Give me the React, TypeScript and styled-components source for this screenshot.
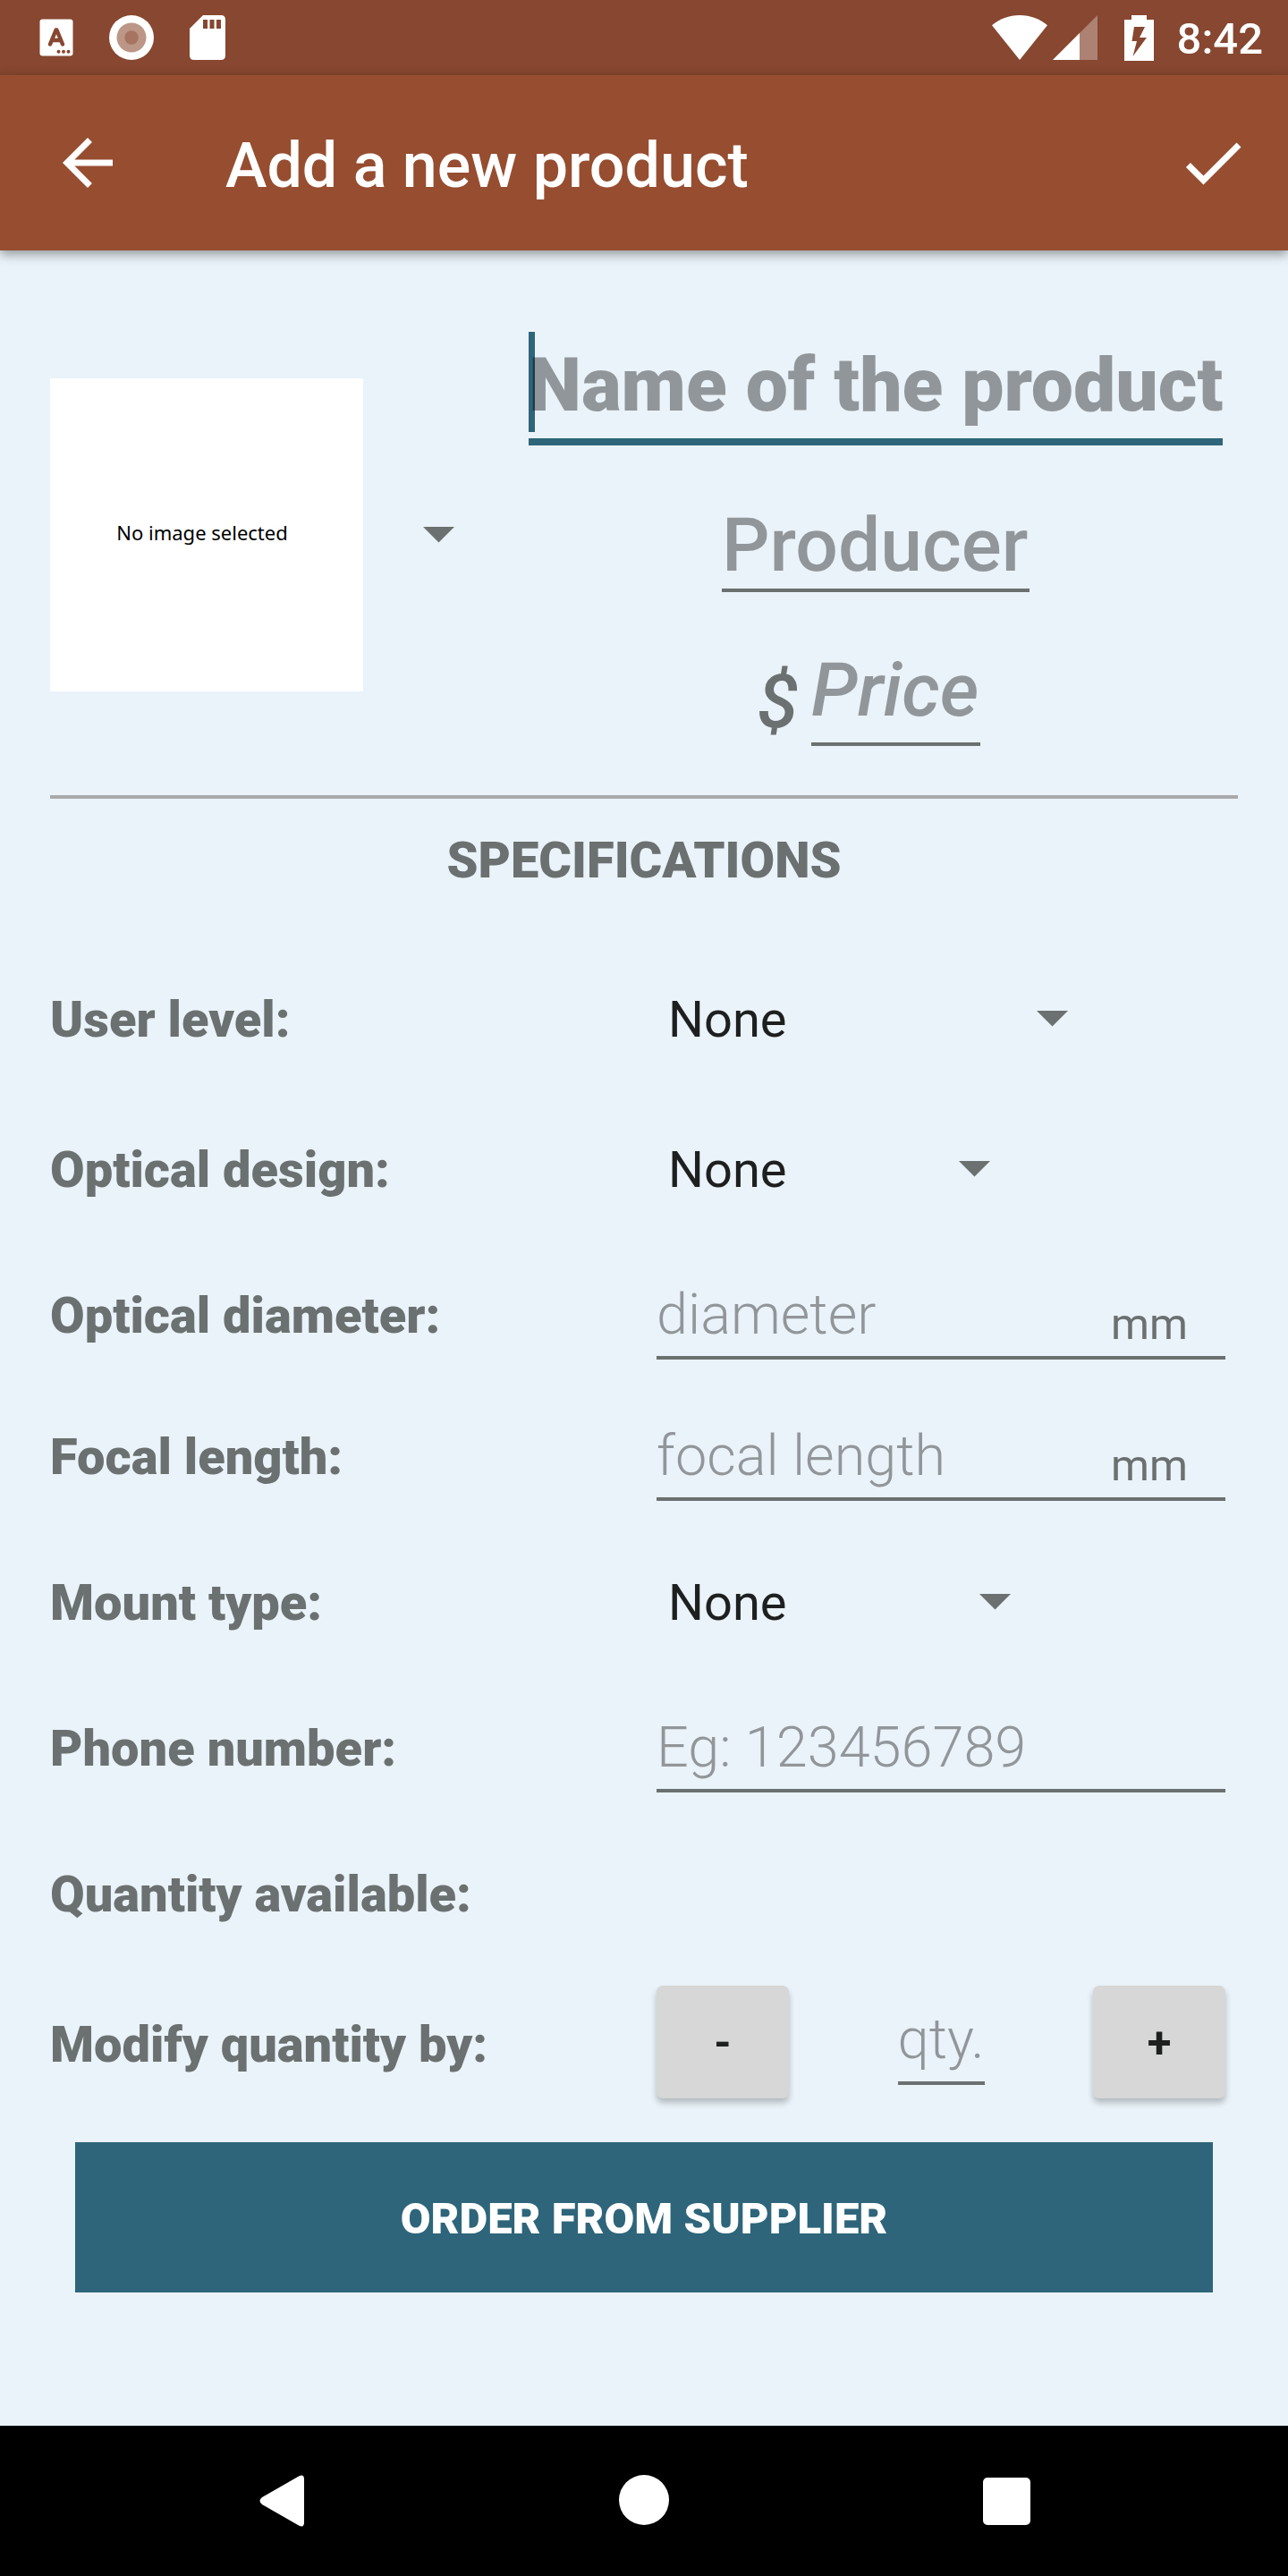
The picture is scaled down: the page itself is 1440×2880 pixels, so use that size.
import React from "react";
import styled, { createGlobalStyle, css } from "styled-components";

const color = {
  status: "#874730",
  bar: "#964d30",
  page: "#eaf3f9",
  accent: "#2e657a",
  label: "#6b7070",
  hint: "rgba(0, 0, 0, 0.38)",
  text: "#1e1f1f",
  key: "#d6d7d6",
  rule: "#a9a9a9",
};

const GlobalStyle = createGlobalStyle`
  *, *::before, *::after { box-sizing: border-box; }
  body { margin: 0; background: ${color.page}; }
  body, button, input, select { font-family: Roboto, "Noto Sans", sans-serif; }
  button { border: 0; padding: 0; background: none; color: inherit; cursor: pointer; }
`;

const Screen = styled.div`
  display: flex;
  flex-direction: column;
  min-height: 100vh;
`;

const StatusBar = styled.div`
  display: flex;
  align-items: center;
  justify-content: space-between;
  height: 84px;
  padding: 0 28px 0 44px;
  background: ${color.status};
  color: #fff;
`;

const IconGroup = styled.div<{ $gap: number }>`
  display: flex;
  align-items: center;
  gap: ${(p) => p.$gap}px;
`;

const BatterySlot = styled.span`
  display: flex;
  padding: 0 20px 0 24px;
`;

const Clock = styled.time`
  padding-top: 4px;
  font-size: 49px;
  font-weight: 500;
  line-height: 56px;
`;

const AppBar = styled.header`
  display: flex;
  align-items: center;
  gap: 112px;
  height: 196px;
  padding: 0 42px 0 56px;
  background: ${color.bar};
  color: #fff;
  box-shadow: 0 4px 12px rgba(0, 0, 0, 0.4);
`;

const IconButton = styled.button`
  display: flex;
  flex: none;
`;

const Title = styled.h1`
  flex: 1;
  margin: 0;
  padding-top: 6px;
  font-size: 70px;
  font-weight: 500;
  line-height: 82px;
`;

const Form = styled.form`
  display: flex;
  flex-direction: column;
  padding: 82px 56px 56px;
`;

const Summary = styled.section`
  display: flex;
  align-items: center;
  padding-bottom: 55px;
  border-bottom: 4px solid ${color.rule};
`;

const ImagePicker = styled.button`
  display: flex;
  align-items: center;
  gap: 67px;
`;

const Preview = styled.span`
  display: flex;
  align-items: center;
  justify-content: center;
  width: 350px;
  height: 350px;
  padding: 0 10px 6px 0;
  background: #fff;
  color: #000;
  font-family: "Noto Sans", sans-serif;
  font-size: 22px;
  line-height: 28px;
`;

const Identity = styled.div`
  display: flex;
  flex: 1;
  flex-direction: column;
  align-items: center;
  gap: 52px;
  margin-left: 66px;
  padding: 12px 17px 0;
`;

const lineInput = css`
  min-width: 0;
  margin: 0;
  padding: 0;
  border: 0;
  border-radius: 0;
  outline: 0;
  background: none;
  color: ${color.text};
  &::placeholder {
    color: ${color.hint};
    opacity: 1;
  }
`;

const NameField = styled.div`
  position: relative;
  width: 100%;
`;

const Cursor = styled.span`
  position: absolute;
  top: -3px;
  left: 0;
  width: 7px;
  height: 112px;
  background: ${color.accent};
`;

const NameInput = styled.input`
  ${lineInput}
  position: relative;
  display: block;
  width: 100%;
  height: 124px;
  padding-bottom: 4px;
  border-bottom: 8px solid ${color.accent};
  font-size: 84px;
  font-weight: 900;
`;

const ProducerInput = styled.input`
  ${lineInput}
  width: 344px;
  height: 112px;
  padding-top: 10px;
  border-bottom: 4px solid ${color.label};
  font-size: 84px;
  font-weight: 500;
`;

const PriceField = styled.label`
  display: flex;
  align-items: flex-end;
  gap: 14px;
  padding-right: 16px;
  color: ${color.label};
  font-size: 84px;
  font-style: italic;
  font-weight: 500;
  line-height: 98px;
`;

const PriceInput = styled.input`
  ${lineInput}
  width: 189px;
  height: 120px;
  padding-bottom: 2px;
  border-bottom: 4px solid ${color.label};
  font: inherit;
`;

const SectionTitle = styled.h2`
  margin: 36px 0 60px;
  color: ${color.label};
  font-size: 56px;
  font-weight: 900;
  line-height: 66px;
  text-align: center;
`;

const Row = styled.div<{ $compact?: boolean }>`
  display: grid;
  grid-template-columns: 678px minmax(0, 1fr);
  align-items: center;
  min-height: ${(p) => (p.$compact ? 158 : 168)}px;
  padding-right: 14px;
`;

const Label = styled.label`
  padding-top: 2px;
  color: ${color.label};
  font-size: 56px;
  font-weight: 900;
  line-height: 66px;
`;

const Field = styled.div`
  display: flex;
  align-items: flex-end;
  height: 100px;
  border-bottom: 4px solid ${color.label};
`;

const FieldInput = styled.input`
  ${lineInput}
  flex: 1;
  height: 96px;
  padding-top: 2px;
  font-size: 63px;
  font-weight: 300;
`;

const Unit = styled.span`
  padding: 0 42px 7px 0;
  color: ${color.label};
  font-size: 49px;
  line-height: 57px;
`;

const Spinner = styled.div<{ $width: number }>`
  position: relative;
  display: flex;
  align-items: center;
  width: ${(p) => p.$width}px;
  max-width: 100%;
`;

const SpinnerSelect = styled.select`
  width: 100%;
  height: 84px;
  padding: 2px 56px 0 13px;
  border: 0;
  outline: 0;
  background: none;
  appearance: none;
  color: ${color.text};
  font-size: 56px;
`;

const SpinnerArrow = styled.span`
  position: absolute;
  right: 0;
  display: flex;
  pointer-events: none;
`;

const Stepper = styled.div`
  display: flex;
  align-items: center;
  justify-content: space-between;
  padding-bottom: 4px;
`;

const StepButton = styled.button`
  width: 148px;
  height: 126px;
  border-radius: 7px;
  background: ${color.key};
  color: ${color.text};
  font-size: 49px;
  font-weight: 700;
  box-shadow: 0 5px 7px rgba(0, 0, 0, 0.24);
`;

const QuantityInput = styled.input`
  ${lineInput}
  width: 97px;
  height: 100px;
  margin-bottom: 4px;
  border-bottom: 4px solid ${color.label};
  font-size: 63px;
  font-weight: 300;
`;

const OrderButton = styled.button`
  height: 168px;
  margin: 26px 28px 0;
  padding-top: 2px;
  background: ${color.accent};
  color: #fff;
  font-size: 49px;
  font-weight: 900;
`;

const NavBar = styled.nav`
  display: flex;
  align-items: center;
  justify-content: center;
  gap: 348px;
  height: 168px;
  margin-top: auto;
  background: #000;
`;

const DropArrow = () => (
  <svg width="35" height="18" viewBox="0 0 35 18" aria-hidden="true">
    <path d="M0 0H35L17.5 17.5Z" fill={color.label} />
  </svg>
);

const KeyboardIcon = () => (
  <svg width="38" height="42" viewBox="0 0 38 42" aria-hidden="true">
    <rect x="0.5" y="0.5" width="37" height="41" rx="3" fill="#fff" />
    <path
      d="M12 28.5L18.6 12.5H19.4L26 28.5M14.5 24H23.5"
      fill="none"
      stroke={color.status}
      strokeWidth="4.5"
      strokeLinecap="round"
      strokeLinejoin="round"
    />
    <circle cx="21.5" cy="36.8" r="2" fill={color.status} />
    <circle cx="27" cy="36.8" r="2" fill={color.status} />
    <circle cx="32.5" cy="36.8" r="2" fill={color.status} />
  </svg>
);

const RecordIcon = () => (
  <svg width="50" height="50" viewBox="0 0 50 50" aria-hidden="true">
    <circle cx="25" cy="25" r="25" fill="#fff" />
    <circle cx="25" cy="25" r="16.5" fill="#bc9687" />
    <circle cx="25" cy="25" r="7.7" fill="#a67460" />
  </svg>
);

const SdCardIcon = () => (
  <svg width="40" height="50" viewBox="0 0 40 50" aria-hidden="true">
    <path d="M15 0H35Q40 0 40 5V45Q40 50 35 50H5Q0 50 0 45V15Z" fill="#fff" />
    <path d="M15 5h5v10h-5zM22.5 5h5v10h-5zM30 5h5v10h-5z" fill={color.status} />
  </svg>
);

const WifiIcon = () => (
  <svg width="62" height="50" viewBox="0 0 62 50" aria-hidden="true">
    <path d="M0 11.3C8.5 4 19 0 31 0S53.5 4 62 11.3L31 50Z" fill="#fff" />
  </svg>
);

const SignalIcon = () => (
  <svg width="50" height="50" viewBox="0 0 50 50" aria-hidden="true">
    <path d="M0 50L50 0V50Z" fill="#fff" fillOpacity="0.32" />
    <path d="M0 50L30 20V50Z" fill="#fff" />
  </svg>
);

const BatteryIcon = () => (
  <svg width="33" height="51" viewBox="0 0 33 51" aria-hidden="true">
    <path d="M8 0H25V5H33V51H0V5H8Z" fill="#fff" />
    <path d="M11 13H23L17 25H25L9.5 46L14 29H8.5Z" fill={color.status} />
  </svg>
);

const BackArrow = () => (
  <svg width="84" height="84" viewBox="0 0 24 24" aria-hidden="true">
    <path d="M20 11H7.83l5.59-5.59L12 4l-8 8 8 8 1.41-1.41L7.83 13H20v-2z" fill="currentColor" />
  </svg>
);

const CheckMark = () => (
  <svg width="84" height="84" viewBox="0 0 24 24" aria-hidden="true">
    <path d="M9 16.17L4.83 12l-1.42 1.41L9 19 21 7l-1.41-1.41z" fill="currentColor" />
  </svg>
);

type Choice = { id: string; label: string; width: number; options: string[] };

const ChoiceRow = ({ id, label, width, options }: Choice) => (
  <Row>
    <Label htmlFor={id}>{label}</Label>
    <Spinner $width={width}>
      <SpinnerSelect id={id} defaultValue={options[0]}>
        {options.map((option) => (
          <option key={option}>{option}</option>
        ))}
      </SpinnerSelect>
      <SpinnerArrow>
        <DropArrow />
      </SpinnerArrow>
    </Spinner>
  </Row>
);

type Entry = { id: string; label: string; hint: string; unit?: string; type?: string };

const EntryRow = ({ id, label, hint, unit, type = "text" }: Entry) => (
  <Row $compact>
    <Label htmlFor={id}>{label}</Label>
    <Field>
      <FieldInput id={id} type={type} placeholder={hint} />
      {unit && <Unit>{unit}</Unit>}
    </Field>
  </Row>
);

export default function App() {
  return (
    <Screen>
      <GlobalStyle />
      <StatusBar>
        <IconGroup $gap={40}>
          <KeyboardIcon />
          <RecordIcon />
          <SdCardIcon />
        </IconGroup>
        <IconGroup $gap={6}>
          <WifiIcon />
          <SignalIcon />
          <BatterySlot>
            <BatteryIcon />
          </BatterySlot>
          <Clock>8:42</Clock>
        </IconGroup>
      </StatusBar>

      <AppBar>
        <IconButton type="button" aria-label="Back">
          <BackArrow />
        </IconButton>
        <Title>Add a new product</Title>
        <IconButton type="submit" form="product" aria-label="Save">
          <CheckMark />
        </IconButton>
      </AppBar>

      <Form id="product" onSubmit={(event) => event.preventDefault()}>
        <Summary>
          <ImagePicker type="button" aria-haspopup="listbox">
            <Preview>No image selected</Preview>
            <DropArrow />
          </ImagePicker>
          <Identity>
            <NameField>
              <Cursor />
              <NameInput aria-label="Name of the product" placeholder="Name of the product" />
            </NameField>
            <ProducerInput aria-label="Producer" placeholder="Producer" />
            <PriceField>
              $
              <PriceInput aria-label="Price" inputMode="decimal" placeholder="Price" />
            </PriceField>
          </Identity>
        </Summary>

        <SectionTitle>SPECIFICATIONS</SectionTitle>

        <ChoiceRow id="level" label="User level:" width={460} options={["None", "Beginner", "Intermediate", "Advanced"]} />
        <ChoiceRow id="design" label="Optical design:" width={373} options={["None", "Refractor", "Reflector"]} />
        <EntryRow id="diameter" label="Optical diameter:" hint="diameter" unit="mm" />
        <EntryRow id="focal" label="Focal length:" hint="focal length" unit="mm" />
        <ChoiceRow id="mount" label="Mount type:" width={396} options={["None", "Altazimuth", "Equatorial"]} />
        <EntryRow id="phone" label="Phone number:" hint="Eg: 123456789" type="tel" />
        <Row>
          <Label as="span">Quantity available:</Label>
        </Row>
        <Row>
          <Label htmlFor="quantity">Modify quantity by:</Label>
          <Stepper>
            <StepButton type="button" aria-label="Decrease">-</StepButton>
            <QuantityInput id="quantity" inputMode="numeric" placeholder="qty." />
            <StepButton type="button" aria-label="Increase">+</StepButton>
          </Stepper>
        </Row>

        <OrderButton type="button">ORDER FROM SUPPLIER</OrderButton>
      </Form>

      <NavBar aria-label="System">
        <IconButton type="button" aria-label="Back">
          <svg width="56" height="58" viewBox="0 0 56 58">
            <path d="M46 1.5Q52 -1.5 52 5V53Q52 59.5 46 56.5L5 33Q0 29 5 25Z" fill="#fff" />
          </svg>
        </IconButton>
        <IconButton type="button" aria-label="Home">
          <svg width="56" height="58" viewBox="0 0 56 58">
            <circle cx="28" cy="28" r="28" fill="#fff" />
          </svg>
        </IconButton>
        <IconButton type="button" aria-label="Recent apps">
          <svg width="56" height="58" viewBox="0 0 56 58">
            <rect x="3" y="3" width="53" height="53" rx="5" fill="#fff" />
          </svg>
        </IconButton>
      </NavBar>
    </Screen>
  );
}
